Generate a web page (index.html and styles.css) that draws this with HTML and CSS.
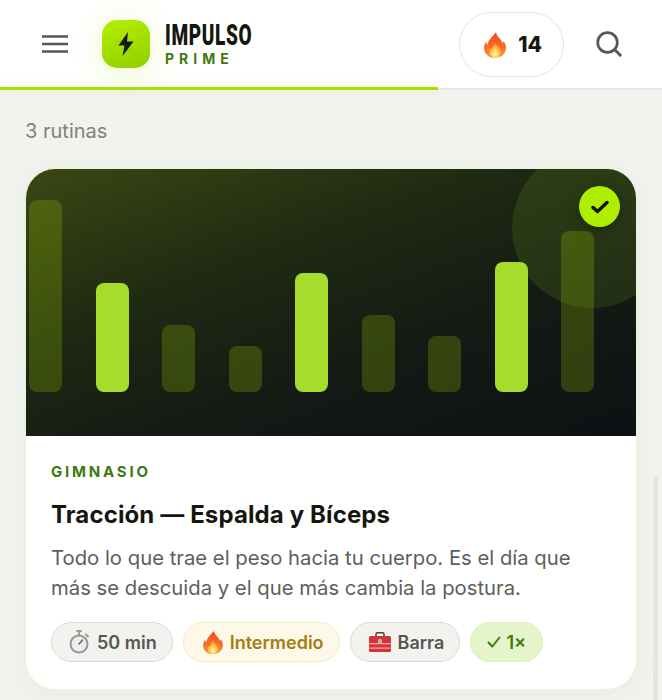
FILE: index.html
```html
<!DOCTYPE html>
<html lang="es">
<head>
    <meta charset="UTF-8">
    <meta name="viewport" content="width=device-width, initial-scale=1.0">
    <title>Impulso Prime</title>
    <link rel="stylesheet" href="styles.css">
</head>
<body>
    <svg class="defs" width="0" height="0">
        <defs>
            <linearGradient id="flameOuter" x1="0" y1="0" x2="0" y2="1">
                <stop offset="0" stop-color="#f0452a"/>
                <stop offset="0.6" stop-color="#f5712a"/>
                <stop offset="1" stop-color="#f99a2e"/>
            </linearGradient>
            <radialGradient id="flameInner" cx="0.5" cy="0.75" r="0.6">
                <stop offset="0" stop-color="#fff6b0"/>
                <stop offset="0.6" stop-color="#fdc83a"/>
                <stop offset="1" stop-color="#f98a2a"/>
            </radialGradient>
            <symbol id="flame" viewBox="0 0 24 28">
                <path fill="url(#flameOuter)" d="M13 0c1 4 3.500 6 5.500 8.500 1 1.300 1.500 2.500 1.700 3.700.5-.7.9-1.500 1-2.300C23.200 12 24 14.500 24 17c0 6.500-5.300 11-12 11S0 23.500 0 17.500c0-2.800 1-5 2.300-7 .2 1.500.7 2.600 1.700 3.300C4.300 8.500 8.500 5.500 13 0z"/>
                <path fill="url(#flameInner)" d="M12.500 11c.6 2.500 2.200 3.600 3.700 5.300 1.500 1.700 2.300 3.400 2.300 5.200 0 3.700-2.900 6.500-6.500 6.500s-6.500-2.700-6.500-6.300c0-1.700.7-3.200 1.800-4.500.2.900.6 1.600 1.300 2 .3-3.200 1.800-5.700 3.900-8.200z"/>
            </symbol>
        </defs>
    </svg>

    <header class="topbar">
        <button class="icon-btn menu-btn" aria-label="Menu">
            <svg width="26" height="18" viewBox="0 0 26 18"><path d="M0 1.500h26M0 9h26M0 16.500h26" stroke="#555854" stroke-width="2.600" stroke-linecap="round" fill="none"/></svg>
        </button>
        <div class="brand">
            <div class="brand-logo">
                <svg width="16" height="24" viewBox="0 0 16 24"><path d="M10 0 .5 13.500H6.500L4.500 24 15.500 9.500H9z" fill="#14170f"/></svg>
            </div>
            <div class="brand-text">
                <div class="brand-name">IMPULSO</div>
                <div class="brand-sub">PRIME</div>
            </div>
        </div>
        <div class="streak">
            <svg class="streak-flame" width="22" height="26"><use href="#flame"/></svg>
            <span>14</span>
        </div>
        <button class="icon-btn search-btn" aria-label="Buscar">
            <svg width="26" height="26" viewBox="0 0 26 26"><circle cx="11.500" cy="11.500" r="9.800" stroke="#555854" stroke-width="2.700" fill="none"/><path d="M19 19l5.300 5.300" stroke="#555854" stroke-width="2.900" stroke-linecap="round"/></svg>
        </button>
        <div class="progress"><div class="progress-fill" style="width: 66.2%"></div></div>
    </header>

    <main class="content">
        <p class="count">3 rutinas</p>

        <article class="card">
            <div class="hero">
                <div class="hero-circle"></div>
                <div class="bars">
                    <div class="bar bar-dim" style="height: 192px"></div>
                    <div class="bar bar-on" style="height: 109px"></div>
                    <div class="bar bar-dim" style="height: 67px"></div>
                    <div class="bar bar-dim" style="height: 46px"></div>
                    <div class="bar bar-on" style="height: 119px"></div>
                    <div class="bar bar-dim" style="height: 77px"></div>
                    <div class="bar bar-dim" style="height: 56px"></div>
                    <div class="bar bar-on" style="height: 130px"></div>
                    <div class="bar bar-dim" style="height: 161px"></div>
                </div>
                <div class="done-badge">
                    <svg width="18" height="14" viewBox="0 0 18 14"><path d="M2 7.500l4.500 4L16 2.500" stroke="#12150d" stroke-width="3.400" fill="none" stroke-linecap="round" stroke-linejoin="round"/></svg>
                </div>
            </div>
            <div class="card-body">
                <div class="category">GIMNASIO</div>
                <h2 class="title">Tracción — Espalda y Bíceps</h2>
                <p class="desc">Todo lo que trae el peso hacia tu cuerpo. Es el día que más se descuida y el que más cambia la postura.</p>
                <div class="chips">
                    <span class="chip">
                        <svg width="22" height="24" viewBox="0 0 22 24">
                            <path d="M9 1h4M11 1v4M18 4.500l2 2" stroke="#9a9ca0" stroke-width="2" stroke-linecap="round"/>
                            <circle cx="11" cy="14" r="9.500" fill="#96989c"/>
                            <circle cx="11" cy="14" r="7.500" fill="#eceded"/>
                            <path d="M11 14l3.500-4" stroke="#55575b" stroke-width="1.300" stroke-linecap="round"/>
                        </svg>
                        50 min
                    </span>
                    <span class="chip chip-warm">
                        <svg width="20" height="23"><use href="#flame"/></svg>
                        Intermedio
                    </span>
                    <span class="chip chip-tool">
                        <svg width="22" height="20" viewBox="0 0 22 20">
                            <path d="M7 5V2.500C7 1.200 7.700.8 8.500.8h5c.8 0 1.500.4 1.500 1.700V5" stroke="#44403e" stroke-width="1.500" fill="none"/>
                            <rect y="4" width="22" height="16" rx="1.500" fill="#d8323a"/>
                            <rect y="11" width="22" height="1.300" fill="#f3a5a2"/>
                            <rect y="15.500" width="22" height="1.200" fill="#f3a5a2"/>
                            <rect x="9" y="7" width="4" height="5" rx="1" fill="#b9b3ad"/>
                        </svg>
                        Barra
                    </span>
                    <span class="chip chip-done">
                        <svg width="14" height="12" viewBox="0 0 14 12"><path d="M1.500 6.500L5.300 10.500 12.500 1.500" stroke="#3d7a12" stroke-width="2" fill="none" stroke-linecap="round" stroke-linejoin="round"/></svg>
                        1×
                    </span>
                </div>
            </div>
        </article>
    </main>

    <div class="scroll-thumb"></div>
</body>
</html>
```

FILE: styles.css
```css
* {
    box-sizing: border-box;
}
html, body {
    margin: 0;
    padding: 0;
    height: 700px;
    overflow: hidden;
}
body {
    position: relative;
    font-family: Inter, "Liberation Sans", sans-serif;
    background-color: #f2f3ef;
}
.defs {
    position: absolute;
}
.topbar {
    position: relative;
    height: 90px;
    display: flex;
    align-items: center;
    padding: 0 40px 1px 42px;
    background-color: #fff;
    border-bottom: 2px solid #e6e7e4;
}
.icon-btn {
    padding: 0;
    border: none;
    background: none;
    display: flex;
}
.menu-btn {
    margin-right: 34px;
}
.brand {
    display: flex;
    align-items: center;
    gap: 15px;
}
.brand-logo {
    width: 48px;
    height: 48px;
    border-radius: 15px;
    background: linear-gradient(160deg, #b4ee00, #8fcf00);
    box-shadow: 0 4px 32px rgba(170, 230, 0, 0.24);
    display: flex;
    align-items: center;
    justify-content: center;
}
.brand-name {
    font-family: Roboto, "Liberation Sans", sans-serif;
    font-weight: 900;
    font-size: 29px;
    line-height: 26px;
    letter-spacing: 1px;
    color: #15170f;
    transform: scaleX(0.655);
    transform-origin: left center;
}
.brand-sub {
    margin-top: 3px;
    font-weight: 700;
    font-size: 14px;
    line-height: 15px;
    letter-spacing: 5px;
    color: #3f7a10;
}
.streak {
    margin-left: auto;
    margin-top: 2px;
    width: 105px;
    height: 65px;
    padding-left: 3px;
    border: 1.5px solid #e4e5e2;
    border-radius: 33px;
    display: flex;
    align-items: center;
    justify-content: center;
    gap: 12px;
    font-weight: 800;
    font-size: 21px;
    color: #15170f;
}
.search-btn {
    margin-left: 32px;
}
.progress {
    position: absolute;
    left: 0;
    right: 0;
    bottom: -2px;
    height: 3px;
}
.progress-fill {
    height: 100%;
    background-color: #a6e000;
    box-shadow: 0 0 14px rgba(166, 224, 0, 0.25);
}
.content {
    padding: 26px 25px 0;
}
.count {
    margin: 0 0 22px;
    font-size: 20px;
    line-height: 30px;
    color: #80827d;
}
.card {
    height: 522px;
    background-color: #fff;
    border: 1.5px solid #e9f5cf;
    border-radius: 30px;
    overflow: hidden;
    box-shadow: 0 4px 24px rgba(60, 70, 40, 0.05);
}
.hero {
    position: relative;
    height: 267px;
    overflow: hidden;
    background: linear-gradient(160deg, #3b4813 0%, #1f2a12 35%, #141a14 65%, #0e1114 100%);
}
.hero-circle {
    position: absolute;
    top: -21px;
    right: -36px;
    width: 160px;
    height: 160px;
    border-radius: 50%;
    background-color: rgba(150, 210, 40, 0.13);
}
.bars {
    position: absolute;
    left: 3px;
    right: 42px;
    bottom: 44px;
    display: flex;
    align-items: flex-end;
    justify-content: space-between;
}
.bar {
    width: 33px;
    border-radius: 8px;
}
.bar-on {
    background-color: #a6dd2c;
}
.bar-dim {
    background-color: rgba(160, 205, 0, 0.24);
}
.done-badge {
    position: absolute;
    top: 17px;
    right: 16px;
    width: 41px;
    height: 41px;
    border-radius: 50%;
    background-color: #aeee00;
    box-shadow: 0 2px 12px rgba(0, 0, 0, 0.3);
    display: flex;
    align-items: center;
    justify-content: center;
}
.card-body {
    padding: 25px 25px 0;
}
.category {
    font-weight: 700;
    font-size: 15px;
    line-height: 22px;
    letter-spacing: 2.800px;
    color: #3f7a10;
}
.title {
    margin: 17px 0 0;
    font-weight: 700;
    font-size: 24px;
    line-height: 30px;
    letter-spacing: 0.120px;
    color: #15170f;
}
.desc {
    margin: 13px 0 0;
    font-size: 20.300px;
    line-height: 30px;
    color: #5d5f5b;
}
.chips {
    margin-top: 19px;
    display: flex;
    gap: 10px;
}
.chip {
    height: 40px;
    padding: 0 15px 0 16px;
    border: 1.5px solid #d9dbd6;
    border-radius: 20px;
    background-color: #f2f3ef;
    display: flex;
    align-items: center;
    gap: 7px;
    font-weight: 600;
    font-size: 18px;
    color: #555854;
}
.chip-warm {
    padding-left: 19px;
    border-color: #f7e9c0;
    background-color: #fdf8e8;
    color: #a57c14;
}
.chip-tool {
    padding-left: 18px;
}
.chip-done {
    gap: 5px;
    padding: 0 16px;
    border-color: #d9f0b0;
    background-color: #e6f5c9;
    color: #3d7a12;
}
.scroll-thumb {
    position: absolute;
    top: 476px;
    right: 4px;
    bottom: 0;
    width: 5px;
    background-color: #e4e5e2;
}
```
